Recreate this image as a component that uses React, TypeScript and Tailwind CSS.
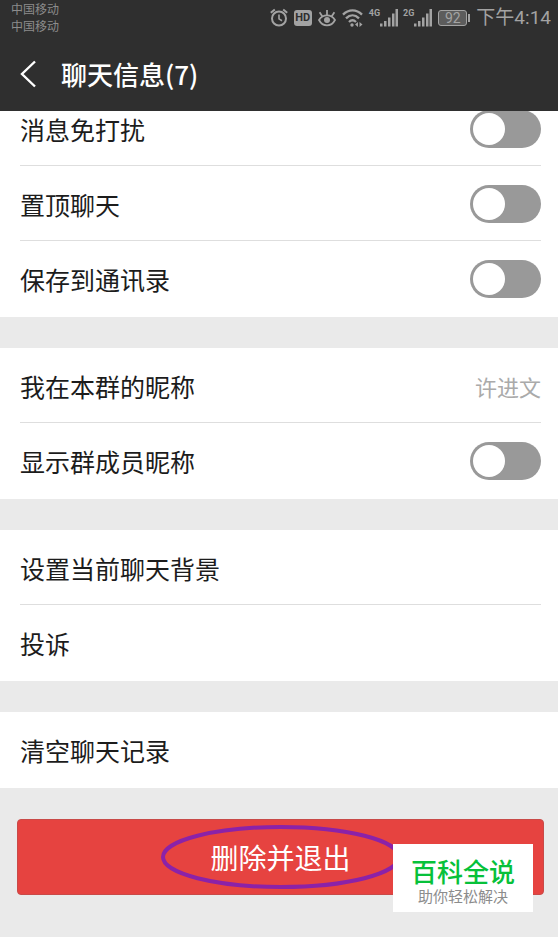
import type { ReactNode } from 'react';

const AlarmIcon = () => (
  <svg width="18" height="20" viewBox="0 0 18 20" fill="none" stroke="currentColor" strokeWidth="2">
    <circle cx="9" cy="10.5" r="7" />
    <path d="M9 6.5v4.4l3 1.8" strokeWidth="1.6" />
    <path d="M0.8 4.8 4.8 1.4M17.2 4.8l-4-3.4" />
  </svg>
);

const EyeIcon = () => (
  <svg width="18" height="20" viewBox="0 0 18 20" fill="none" stroke="currentColor" strokeWidth="1.8">
    <path d="M1 12C3.2 8.6 6 7.4 9 7.4s5.800 1.200 8 4.600c-2 3.800-4.800 5.400-8 5.400S3 15.800 1 12Z" />
    <circle cx="9" cy="12" r="3" fill="currentColor" stroke="none" />
    <path d="M9 7V2M4.4 8.400 1.600 4.200M13.600 8.400l2.800-4.200" />
  </svg>
);

const WifiIcon = () => (
  <svg width="21" height="20" viewBox="0 0 21 20" fill="none" stroke="currentColor" strokeWidth="2.3">
    <path d="M1 6.6c5.500-5.600 13.500-5.600 19 0" />
    <path d="M4 10.4c4-4 9-4 13 0" />
    <path d="M7 14c2.200-2.200 4.800-2.200 7 0" />
    <circle cx="10" cy="17" r="1.7" fill="currentColor" stroke="none" />
    <path d="M13 16.5 16 14v5zM20.500 16.5l-3-2.500v5z" fill="currentColor" stroke="none" />
  </svg>
);

const SignalIcon = () => (
  <svg width="18" height="18" viewBox="0 0 18 18" fill="currentColor">
    <rect x="0" y="14.5" width="2.5" height="3" />
    <rect x="4" y="12" width="2.5" height="5.5" />
    <rect x="8" y="8.5" width="2.5" height="9" />
    <rect x="12" y="4.5" width="2.5" height="13" />
    <rect x="15.5" y="0" width="2.5" height="17.5" />
  </svg>
);

const Signal = ({ network }: { network: string }) => (
  <div className="flex items-start">
    <span className="text-[9px] font-bold leading-2">{network}</span>
    <SignalIcon />
  </div>
);

const StatusBar = () => (
  <div className="flex h-[37px] items-start justify-between pl-[11px] pr-[7px] text-[#a3a3a3]">
    <div className="text-[12px] leading-[17px] text-[#8c8c8c]">
      <p>中国移动</p>
      <p>中国移动</p>
    </div>
    <div className="flex h-[35px] items-center gap-[6px] font-[Roboto,'Noto_Sans_CJK_SC',sans-serif]">
      <AlarmIcon />
      <span className="flex h-4 w-[18px] items-center justify-center rounded-[3px] bg-[#a3a3a3] text-[11px] font-bold leading-4 text-[#2f2f2f]">
        HD
      </span>
      <EyeIcon />
      <WifiIcon />
      <div className="flex gap-[5px]">
        <Signal network="4G" />
        <Signal network="2G" />
      </div>
      <div className="flex items-center gap-px">
        <span className="flex h-4 w-[29px] items-center justify-center rounded-[3px] border border-[#a3a3a3] bg-[#5c5c5c] text-[14px] leading-4">
          92
        </span>
        <span className="h-2 w-[2px] bg-[#a3a3a3]" />
      </div>
      <span className="text-[19px] leading-6">下午4:14</span>
    </div>
  </div>
);

const Group = ({ children, className = '' }: { children: ReactNode; className?: string }) => (
  <section className={`bg-white pb-px ${className}`}>
    <div className="ml-5 mr-[17px] divide-y divide-[#dedede]">{children}</div>
  </section>
);

const rowClass =
  'flex h-[75px] w-full items-center justify-between pt-px text-left text-[25px] leading-7 text-[#1c1c1c]';

const ToggleRow = ({ label }: { label: string }) => (
  <label className={rowClass}>
    {label}
    <input
      type="checkbox"
      role="switch"
      className="h-[38px] w-[71px] appearance-none rounded-full bg-[#999] p-[3px] before:block before:size-8 before:rounded-full before:bg-white checked:bg-green-500 checked:before:ml-auto"
    />
  </label>
);

const LinkRow = ({ label, value }: { label: string; value?: string }) => (
  <button type="button" className={rowClass}>
    {label}
    {value && <span className="text-[22px] text-[#aaa]">{value}</span>}
  </button>
);

const App = () => {
  return (
    <div className="min-h-screen bg-[#eaeaea] font-['Noto_Sans_CJK_SC',sans-serif]">
      <header className="bg-[#2f2f2f]">
        <StatusBar />
        <div className="flex h-[74px] items-center gap-6 pl-5 text-white">
          <button type="button" aria-label="返回">
            <svg width="17" height="28" viewBox="0 0 17 28" fill="none" stroke="currentColor" strokeWidth="2.4">
              <path d="M15 1.5 2 14l13 12.5" />
            </svg>
          </button>
          <h1 className="text-[26px] font-medium leading-9">聊天信息(7)</h1>
        </div>
      </header>

      <main className="flex flex-col gap-[31px] overflow-hidden pb-[42px]">
        <Group className="-mt-5">
          <ToggleRow label="消息免打扰" />
          <ToggleRow label="置顶聊天" />
          <ToggleRow label="保存到通讯录" />
        </Group>
        <Group>
          <LinkRow label="我在本群的昵称" value="许进文" />
          <ToggleRow label="显示群成员昵称" />
        </Group>
        <Group>
          <LinkRow label="设置当前聊天背景" />
          <LinkRow label="投诉" />
        </Group>
        <Group>
          <LinkRow label="清空聊天记录" />
        </Group>

        <div className="relative ml-[17px] mr-[14px]">
          <button
            type="button"
            className="h-[76px] w-full rounded-[4px] border border-[#c94a48] bg-[#e64340] text-[28px] text-white"
          >
            删除并退出
          </button>
          <svg
            className="pointer-events-none absolute left-1/2 top-1/2 -translate-x-1/2 -translate-y-1/2"
            width="242"
            height="64"
            viewBox="0 0 242 64"
            fill="none"
          >
            <ellipse cx="121" cy="32" rx="118" ry="30" stroke="#8b22a8" strokeWidth="4" />
          </svg>
          <div className="absolute right-[11px] top-[25px] flex h-[68px] w-[140px] flex-col items-center justify-center bg-white pt-1.5">
            <p className="text-[26px] font-medium leading-[30px] text-[#07c13a]">百科全说</p>
            <p className="text-[15px] leading-5 text-[#8c8c8c]">助你轻松解决</p>
          </div>
        </div>
      </main>
    </div>
  );
};

export default App;
